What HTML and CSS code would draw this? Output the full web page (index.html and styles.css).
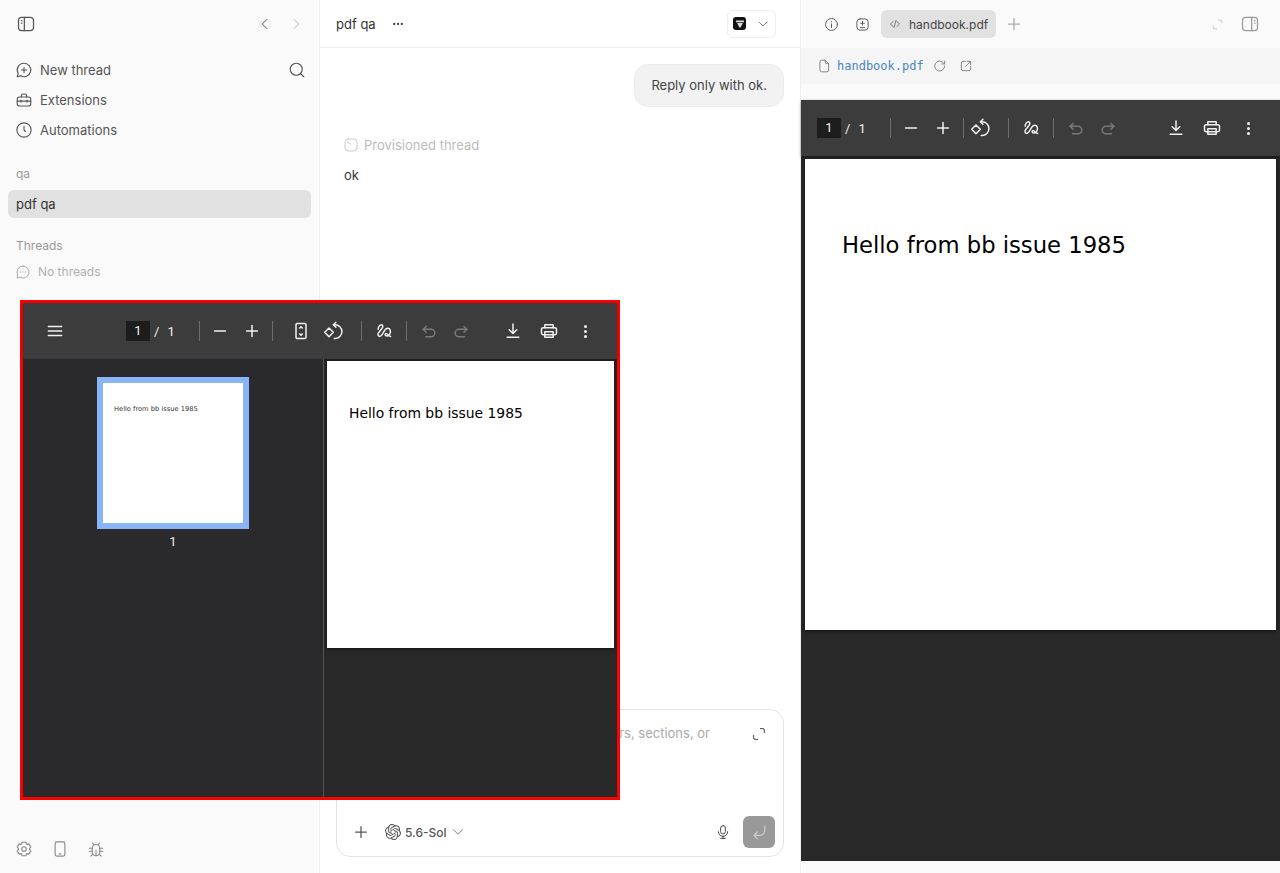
FILE: index.html
```html
<!DOCTYPE html>
<html lang="en">
<head>
  <meta charset="UTF-8">
  <title>pdf qa</title>
  <link rel="stylesheet" href="styles.css">
</head>
<body>
  <svg class="sprites" width="0" height="0">
    <defs>
      <g id="i-minus"><path d="M5.500 12h13"/></g>
      <g id="i-plus"><path d="M12 5.500v13M5.500 12h13"/></g>
      <g id="i-rotate"><path d="M2 13.600l5.200-5.200 5.200 5.200-5.200 5.200z"/><path d="M12.500 4.500h2a8.200 8.200 0 0 1 0 16.400h-1"/><path d="M15.500 1.500l-3 3 3 3"/></g>
      <g id="i-draw"><path d="M5 10C5 7 7 4.500 9 4.500s2 2.500.5 4.500L5.500 14C4 16 5 18.500 7 18.500S11 14 13 11s5.500-3 6.500 0-1 7-3.500 7-3.500-2-2-3 3 3.500 6 3.500"/></g>
      <g id="i-undo"><path d="M8.500 6.500L5 10l3.500 3.500"/><path d="M5 10h9.500a4.500 4.500 0 0 1 0 9H8"/></g>
      <g id="i-redo"><path d="M15.500 6.500L19 10l-3.500 3.500"/><path d="M19 10H9.500a4.500 4.500 0 0 0 0 9H16"/></g>
      <g id="i-download"><path d="M12 3.500v11.500M7.500 10.500L12 15l4.500-4.500M5 19.500h14"/></g>
      <g id="i-print"><path d="M7 8V4.500h10V8"/><rect x="3" y="8" width="18" height="8.500" rx="2"/><path d="M7 13h10v6.500H7z"/></g>
      <g id="i-chevron"><path d="M6 9l6 6 6-6"/></g>
    </defs>
  </svg>

  <div class="app">
    <aside class="sidebar">
      <div class="side-top">
        <svg class="icon icon-lg" viewBox="0 0 24 24"><rect x="3" y="4" width="18" height="16" rx="4"/><path d="M10 4v16M6.500 8h.5M6.500 11h.5"/></svg>
        <div class="side-nav">
          <svg class="icon" viewBox="0 0 24 24"><path d="M15 5l-7 7 7 7"/></svg>
          <svg class="icon faint" viewBox="0 0 24 24"><path d="M9 5l7 7-7 7"/></svg>
        </div>
      </div>

      <ul class="menu">
        <li class="menu-item">
          <svg class="icon" viewBox="0 0 24 24"><path d="M12 3a9 9 0 1 1-4.500 16.800L3 21l1.200-4.500A9 9 0 0 1 12 3z"/><path d="M12 8.500v7M8.500 12h7"/></svg>
          <span>New thread</span>
          <svg class="icon icon-search" viewBox="0 0 24 24"><circle cx="11" cy="11" r="8"/><path d="M17 17l4 4"/></svg>
        </li>
        <li class="menu-item">
          <svg class="icon" viewBox="0 0 24 24"><path d="M8.500 8V6a2 2 0 0 1 2-2h3a2 2 0 0 1 2 2v2"/><rect x="3" y="8" width="18" height="12" rx="3"/><path d="M3 13.500h18M8 12v3M16 12v3"/></svg>
          <span>Extensions</span>
        </li>
        <li class="menu-item">
          <svg class="icon" viewBox="0 0 24 24"><circle cx="12" cy="12" r="9.500"/><path d="M12 7v5l2 2"/></svg>
          <span>Automations</span>
        </li>
      </ul>

      <div class="side-label side-label-qa">qa</div>
      <div class="side-thread">pdf qa</div>
      <div class="side-label side-label-threads">Threads</div>
      <div class="no-threads">
        <svg class="icon icon-sm" viewBox="0 0 24 24"><path d="M12 3a9 9 0 1 1-4.500 16.800L3 21l1.200-4.500A9 9 0 0 1 12 3z"/><path d="M8 12h.5M11.800 12h.5M15.500 12h.5"/></svg>
        <span>No threads</span>
      </div>

      <div class="side-bottom">
        <svg class="icon" viewBox="0 0 24 24"><path d="M9.500 3h5l1 2.800 3-.6 2.500 4.300-2 2.500 2 2.500-2.500 4.300-3-.6-1 2.800h-5l-1-2.800-3 .6L3 14.500l2-2.500-2-2.500 2.500-4.300 3 .6z"/><circle cx="12" cy="12" r="3"/></svg>
        <svg class="icon" viewBox="0 0 24 24"><rect x="5.500" y="2.500" width="13" height="19" rx="2.500"/><path d="M11 18.500h2"/></svg>
        <svg class="icon" viewBox="0 0 24 24"><path d="M7 11a5 5 0 0 1 10 0v5a5 5 0 0 1-10 0z"/><path d="M9 6.500L7.500 4M15 6.500L16.500 4M7 11H3M17 11h4M7 15H3M17 15h4M8 19l-3 2.500M16 19l3 2.500M12 14v7"/></svg>
      </div>
    </aside>

    <main class="chat">
      <header class="chat-head">
        <span class="chat-title">pdf qa</span>
        <span class="chat-more">
          <svg class="icon" viewBox="0 0 24 24"><circle cx="5.500" cy="12" r="2"/><circle cx="12" cy="12" r="2"/><circle cx="18.500" cy="12" r="2"/></svg>
        </span>
        <div class="app-picker">
          <span class="app-logo"><svg viewBox="0 0 14 14" width="10" height="10"><path d="M1.500 2h11v2.500h-11zM3 5.500h8L7.800 12H6.200z"/></svg></span>
          <svg class="icon icon-chev" viewBox="0 0 24 24"><use href="#i-chevron"/></svg>
        </div>
      </header>

      <div class="messages">
        <div class="bubble">Reply only with ok.</div>
        <div class="status">
          <svg class="icon icon-sm" viewBox="0 0 24 24"><rect x="3" y="3" width="18" height="18" rx="5"/><path d="M7 8l4 2.500M7 8v.5"/></svg>
          <span>Provisioned thread</span>
        </div>
        <p class="reply">ok</p>
      </div>

      <div class="composer">
        <div class="composer-text">
          <span class="placeholder">rs, sections, or</span>
          <svg class="icon icon-expand" viewBox="0 0 24 24"><path d="M14 4h4a2 2 0 0 1 2 2v4M10 20H6a2 2 0 0 1-2-2v-4"/></svg>
        </div>
        <div class="composer-bar">
          <svg class="icon icon-add" viewBox="0 0 24 24"><use href="#i-plus"/></svg>
          <svg class="icon icon-model" viewBox="0 0 24 24"><path d="M22.2819 9.8211a5.9847 5.9847 0 0 0-.5157-4.9108 6.0462 6.0462 0 0 0-6.5098-2.9A6.0651 6.0651 0 0 0 4.9807 4.1818a5.9847 5.9847 0 0 0-3.9977 2.9 6.0462 6.0462 0 0 0 .7427 7.0966 5.98 5.98 0 0 0 .511 4.9107 6.051 6.051 0 0 0 6.5146 2.9001A5.9847 5.9847 0 0 0 13.2599 24a6.0557 6.0557 0 0 0 5.7718-4.2058 5.9894 5.9894 0 0 0 3.9977-2.9001 6.0557 6.0557 0 0 0-.7475-7.0729zm-9.022 12.6081a4.4755 4.4755 0 0 1-2.8764-1.0408l.1419-.0804 4.7783-2.7582a.7948.7948 0 0 0 .3927-.6813v-6.7369l2.02 1.1686a.071.071 0 0 1 .038.052v5.5826a4.504 4.504 0 0 1-4.4945 4.4944zm-9.6607-4.1254a4.4708 4.4708 0 0 1-.5346-3.0137l.142.0852 4.783 2.7582a.7712.7712 0 0 0 .7806 0l5.8428-3.3685v2.3324a.0804.0804 0 0 1-.0332.0615L9.74 19.9502a4.4992 4.4992 0 0 1-6.1408-1.6464zM2.3408 7.8956a4.485 4.485 0 0 1 2.3655-1.9728V11.6a.7664.7664 0 0 0 .3879.6765l5.8144 3.3543-2.0201 1.1685a.0757.0757 0 0 1-.071 0l-4.8303-2.7865A4.504 4.504 0 0 1 2.3408 7.872zm16.5963 3.8558L13.1038 8.364 15.1192 7.2a.0757.0757 0 0 1 .071 0l4.8303 2.7913a4.4944 4.4944 0 0 1-.6765 8.1042v-5.6772a.79.79 0 0 0-.407-.667zm2.0107-3.0231l-.142-.0852-4.7735-2.7818a.7759.7759 0 0 0-.7854 0L9.409 9.2297V6.8974a.0662.0662 0 0 1 .0284-.0615l4.8303-2.7866a4.4992 4.4992 0 0 1 6.6802 4.66zM8.3065 12.863l-2.02-1.1638a.0804.0804 0 0 1-.038-.0567V6.0742a4.4992 4.4992 0 0 1 7.3757-3.4537l-.142.0805L8.704 5.459a.7948.7948 0 0 0-.3927.6813zm1.0976-2.3654l2.602-1.4998 2.6069 1.4998v2.9994l-2.5974 1.4997-2.6067-1.4997Z"/></svg>
          <span class="model-name">5.6-Sol</span>
          <svg class="icon icon-chev icon-chev-model" viewBox="0 0 24 24"><use href="#i-chevron"/></svg>
          <svg class="icon icon-mic" viewBox="0 0 24 24"><rect x="8.500" y="2.500" width="7" height="12.500" rx="3.500"/><path d="M5 11.500a7 7 0 0 0 14 0M12 18.500v3M8.500 21.500h7"/></svg>
          <button class="send">
            <svg class="icon" viewBox="0 0 24 24"><path d="M19 5v5a6 6 0 0 1-6 6H6M10 12l-4 4 4 4"/></svg>
          </button>
        </div>
      </div>
    </main>

    <section class="preview">
      <div class="tabs">
        <svg class="icon" viewBox="0 0 24 24"><circle cx="12" cy="12" r="9.500"/><path d="M12 11v6M12 7.200v.6"/></svg>
        <svg class="icon tab-diff" viewBox="0 0 24 24"><rect x="3" y="3" width="18" height="18" rx="5"/><path d="M12 7v6M9 10h6M8.500 17h7"/></svg>
        <div class="tab">
          <svg class="icon" viewBox="0 0 24 24"><path d="M8 7l-5 5 5 5M16 7l5 5-5 5M14 5l-4 14"/></svg>
          <span>handbook.pdf</span>
        </div>
        <svg class="icon icon-tab-add" viewBox="0 0 24 24"><use href="#i-plus"/></svg>
        <svg class="icon icon-shrink" viewBox="0 0 24 24"><path d="M14 4h4a2 2 0 0 1 2 2v3M10 20H6a2 2 0 0 1-2-2v-3"/></svg>
        <svg class="icon icon-panel" viewBox="0 0 24 24"><rect x="3" y="4" width="18" height="16" rx="4"/><path d="M14 4v16M17.500 8h.5M17.500 11h.5"/></svg>
      </div>

      <div class="file-bar">
        <svg class="icon" viewBox="0 0 24 24"><path d="M5 5a3 3 0 0 1 3-3h6l6 6v11a3 3 0 0 1-3 3H8a3 3 0 0 1-3-3z"/><path d="M14 2v3a3 3 0 0 0 3 3h3"/></svg>
        <span class="file-name">handbook.pdf</span>
        <svg class="icon icon-reload" viewBox="0 0 24 24"><path d="M20 12a8.500 8.500 0 1 1-2.500-6L20 8.500M20 3.500v5h-5"/></svg>
        <svg class="icon icon-open" viewBox="0 0 24 24"><path d="M11 4H7a3 3 0 0 0-3 3v10a3 3 0 0 0 3 3h10a3 3 0 0 0 3-3v-4"/><path d="M14 4h6v6M20 4l-9 9"/></svg>
      </div>

      <div class="viewer">
        <div class="pdf-bar">
          <div class="pager">
            <span class="page-box">1</span>
            <span class="page-sep">/</span>
            <span class="page-total">1</span>
          </div>
          <span class="pdf-div"></span>
          <div class="pdf-group pdf-zoom">
            <svg class="pdf-icon" viewBox="0 0 24 24"><use href="#i-minus"/></svg>
            <svg class="pdf-icon" viewBox="0 0 24 24"><use href="#i-plus"/></svg>
          </div>
          <span class="pdf-div"></span>
          <div class="pdf-group pdf-page-tools pdf-rotate-only">
            <svg class="pdf-icon" viewBox="0 0 24 24"><use href="#i-rotate"/></svg>
          </div>
          <span class="pdf-div"></span>
          <div class="pdf-group pdf-draw">
            <svg class="pdf-icon" viewBox="0 0 24 24"><use href="#i-draw"/></svg>
          </div>
          <span class="pdf-div"></span>
          <div class="pdf-group pdf-history">
            <svg class="pdf-icon dim" viewBox="0 0 24 24"><use href="#i-undo"/></svg>
            <svg class="pdf-icon dim" viewBox="0 0 24 24"><use href="#i-redo"/></svg>
          </div>
          <div class="pdf-group pdf-end">
            <svg class="pdf-icon" viewBox="0 0 24 24"><use href="#i-download"/></svg>
            <svg class="pdf-icon" viewBox="0 0 24 24"><use href="#i-print"/></svg>
            <span class="pdf-dots"><i></i><i></i><i></i></span>
          </div>
        </div>
        <div class="viewer-body">
          <div class="pdf-page">Hello from bb issue 1985</div>
        </div>
      </div>
    </section>
  </div>

  <!-- popped out viewer with the page sidebar open -->
  <div class="popout">
    <div class="pdf-bar pop-bar">
      <svg class="pdf-icon pop-menu" viewBox="0 0 24 24"><path d="M4 6.500h16M4 12h16M4 17.500h16"/></svg>
      <div class="pager">
        <span class="page-box">1</span>
        <span class="page-sep">/</span>
        <span class="page-total">1</span>
      </div>
      <span class="pdf-div"></span>
      <div class="pdf-group pdf-zoom">
        <svg class="pdf-icon" viewBox="0 0 24 24"><use href="#i-minus"/></svg>
        <svg class="pdf-icon" viewBox="0 0 24 24"><use href="#i-plus"/></svg>
      </div>
      <span class="pdf-div"></span>
      <div class="pdf-group pdf-page-tools">
        <svg class="pdf-icon" viewBox="0 0 24 24"><rect x="6" y="3" width="12" height="18" rx="1.500"/><path d="M10.500 8.500L12 7l1.500 1.500M10.500 15.500L12 17l1.500-1.500"/></svg>
        <svg class="pdf-icon" viewBox="0 0 24 24"><use href="#i-rotate"/></svg>
      </div>
      <span class="pdf-div"></span>
      <div class="pdf-group pdf-draw">
        <svg class="pdf-icon" viewBox="0 0 24 24"><use href="#i-draw"/></svg>
      </div>
      <span class="pdf-div"></span>
      <div class="pdf-group pdf-history">
        <svg class="pdf-icon dim" viewBox="0 0 24 24"><use href="#i-undo"/></svg>
        <svg class="pdf-icon dim" viewBox="0 0 24 24"><use href="#i-redo"/></svg>
      </div>
      <div class="pdf-group pdf-end">
        <svg class="pdf-icon" viewBox="0 0 24 24"><use href="#i-download"/></svg>
        <svg class="pdf-icon" viewBox="0 0 24 24"><use href="#i-print"/></svg>
        <span class="pdf-dots"><i></i><i></i><i></i></span>
      </div>
    </div>
    <div class="pop-body">
      <div class="thumbs">
        <div class="thumb"><div class="thumb-page">Hello from bb issue 1985</div></div>
        <div class="thumb-num">1</div>
      </div>
      <div class="pop-main">
        <div class="pop-page">Hello from bb issue 1985</div>
      </div>
    </div>
  </div>
</body>
</html>
```

FILE: styles.css
```css
* {
  margin: 0;
  padding: 0;
  box-sizing: border-box;
}

html, body {
  height: 100%;
  overflow: hidden;
}

body {
  position: relative;
  background-color: #fff;
  color: #333;
  font-family: Inter, 'Noto Sans', sans-serif;
  font-size: 13px;
}

.sprites {
  position: absolute;
}

.app {
  display: grid;
  grid-template-columns: 320px 481px 479px;
  height: 873px;
}

/* Shared icon look */
.icon {
  width: 16px;
  height: 16px;
  flex: none;
  fill: none;
  stroke: #555;
  stroke-width: 1.5;
  stroke-linecap: round;
  stroke-linejoin: round;
}

.icon-lg {
  width: 20px;
  height: 20px;
}

.icon-sm {
  width: 16px;
  height: 16px;
  stroke: #aaa;
}

.faint {
  stroke: #bbb;
}

/* Left sidebar */
.sidebar {
  display: flex;
  flex-direction: column;
  background-color: #fafafa;
  border-right: 1px solid #eee;
  padding: 0 8px;
}

.side-top {
  display: flex;
  align-items: center;
  justify-content: space-between;
  height: 48px;
  padding: 0 7px 0 8px;
}

.side-nav {
  display: flex;
  gap: 15px;
}

.menu {
  list-style: none;
  margin-top: 7px;
}

.menu-item {
  display: flex;
  align-items: center;
  gap: 7px;
  height: 30px;
  padding: 0 5px 0 7px;
  color: #555;
  font-size: 13px;
}

.menu-item .icon {
  width: 18px;
  height: 18px;
}

.menu-item .icon-search {
  margin-left: auto;
  stroke: #555;
}

.side-label {
  padding-left: 8px;
  color: #999;
  font-size: 12px;
  line-height: 16px;
}

.side-label-qa {
  margin-top: 21px;
}

.side-thread {
  height: 28px;
  margin-top: 8px;
  padding: 0 8px;
  border-radius: 6px;
  background-color: #e1e1e1;
  color: #333;
  font-size: 13px;
  line-height: 28px;
}

.side-label-threads {
  margin-top: 20px;
}

.no-threads {
  display: flex;
  align-items: center;
  gap: 7px;
  margin-top: 10px;
  padding-left: 7px;
  color: #b0b0b0;
  font-size: 12px;
  line-height: 16px;
}

.side-bottom {
  display: flex;
  gap: 18px;
  margin-top: auto;
  padding: 0 0 15px 7px;
}

.side-bottom .icon {
  width: 18px;
  height: 18px;
  stroke: #8a8a8a;
}

/* Chat column */
.chat {
  display: flex;
  flex-direction: column;
  background-color: #fff;
  border-right: 1px solid #eee;
  padding-bottom: 16px;
}

.chat-head {
  display: flex;
  align-items: center;
  height: 48px;
  padding: 0 24px 0 16px;
  border-bottom: 1px solid #eee;
}

.chat-title {
  color: #333;
  font-size: 13px;
}

.chat-more {
  display: flex;
  margin-left: 15px;
}

.chat-more .icon {
  width: 14px;
  height: 14px;
  fill: #444;
  stroke: none;
}

.app-picker {
  display: flex;
  align-items: center;
  gap: 9px;
  height: 28px;
  margin-left: auto;
  padding: 0 4px 0 5px;
  border: 1px solid #eee;
  border-radius: 6px;
}

.app-logo {
  display: flex;
  align-items: center;
  justify-content: center;
  width: 13px;
  height: 13px;
  border-radius: 3px;
  background-color: #111;
}

.app-logo svg {
  fill: #ddd;
}

.icon-chev {
  width: 16px;
  height: 16px;
  stroke: #888;
}

.icon-chev-model {
  width: 18px;
  height: 18px;
  margin-left: -4px;
  stroke: #777;
  stroke-width: 1.25;
}

.messages {
  display: flex;
  flex-direction: column;
  flex: 1;
  padding: 16px 16px 0 24px;
}

.bubble {
  align-self: flex-end;
  height: 43px;
  padding: 0 16px;
  border: 1px solid #ececec;
  border-radius: 14px;
  background-color: #f2f2f2;
  color: #444;
  font-size: 13px;
  line-height: 41px;
}

.status {
  display: flex;
  align-items: center;
  gap: 5px;
  margin: 30px 0 0 -1px;
  color: #bbb;
  font-size: 13px;
  line-height: 16px;
}

.status .icon-sm {
  stroke: #c8c8c8;
}

.reply {
  margin-top: 14px;
  color: #333;
  font-size: 13px;
  line-height: 16px;
}

.composer {
  display: flex;
  flex-direction: column;
  justify-content: space-between;
  height: 148px;
  margin: 0 16px;
  padding: 15px 8px 8px 16px;
  border: 1px solid #e4e4e4;
  border-radius: 14px;
  background-color: #fff;
}

.composer-text {
  display: flex;
  align-items: center;
  justify-content: flex-end;
  padding-right: 8px;
}

.placeholder {
  margin: 0 41px 2px 0;
  color: #aaa;
  font-size: 13px;
}

.icon-expand {
  stroke: #444;
}

.composer-bar {
  display: flex;
  align-items: center;
  height: 32px;
}

.icon-add {
  width: 20px;
  height: 20px;
  margin-left: -2px;
  stroke: #555;
}

.icon-model {
  margin-left: 14px;
  fill: #555;
  stroke: none;
}

.model-name {
  margin: 0 6px 0 4px;
  color: #555;
  font-size: 12px;
  font-weight: 500;
}

.icon-mic {
  margin-left: auto;
  margin-right: 12px;
  stroke: #444;
}

.send {
  display: flex;
  align-items: center;
  justify-content: center;
  width: 32px;
  height: 32px;
  border: 0;
  border-radius: 6px;
  background-color: #999;
}

.send .icon {
  width: 20px;
  height: 20px;
  stroke: #ccc;
}

/* Right preview column */
.preview {
  display: flex;
  flex-direction: column;
  height: 873px;
  background-color: #fafafa;
}

.tabs {
  display: flex;
  align-items: center;
  gap: 16px;
  height: 48px;
  padding: 0 20px 0 23px;
}

.tabs > .icon {
  width: 15px;
  height: 15px;
}

.tab {
  display: flex;
  align-items: center;
  gap: 8px;
  height: 28px;
  margin-left: -5px;
  padding: 0 8px;
  border-radius: 6px;
  background-color: #e1e1e1;
  color: #444;
  font-size: 12px;
}

.tab .icon {
  width: 12px;
  height: 12px;
}

.tabs > .icon-tab-add {
  width: 20px;
  height: 20px;
  margin-left: -8px;
  stroke: #aaa;
}

.tabs > .icon-shrink {
  width: 13px;
  height: 13px;
  margin-left: auto;
  stroke: #bbb;
}

.tabs > .icon-panel {
  width: 20px;
  height: 20px;
  stroke: #999;
}

.file-bar {
  display: flex;
  align-items: center;
  height: 36px;
  padding: 0 0 0 16px;
  background-color: #f5f5f5;
}

.file-bar .icon {
  width: 14px;
  height: 14px;
  stroke: #777;
}

.file-name {
  margin-left: 6px;
  color: #4a86c0;
  font-family: 'DejaVu Sans Mono', monospace;
  font-size: 12px;
}

.file-bar .icon-reload {
  margin-left: 9px;
}

.file-bar .icon-open {
  margin-left: 12px;
}

.viewer {
  display: flex;
  flex-direction: column;
  height: 761px;
  margin-top: 16px;
  background-color: #282828;
}

/* PDF toolbar, used twice */
.pdf-bar {
  display: flex;
  align-items: center;
  height: 56px;
  flex: none;
  padding: 0 22px 0 16px;
  background-color: #3c3c3c;
  box-shadow: 0 1px 3px rgba(0, 0, 0, 0.4);
  color: #f1f1f1;
  font-family: Roboto, sans-serif;
  font-size: 13px;
}

.pager {
  display: flex;
  align-items: center;
  width: 73px;
  flex: none;
}

.page-box {
  width: 24px;
  height: 20px;
  background-color: #1d1d1d;
  text-align: center;
  line-height: 20px;
}

.page-sep {
  margin-left: 4px;
}

.page-total {
  margin-left: 8px;
}

.pdf-div {
  width: 1px;
  height: 20px;
  flex: none;
  background-color: #6e6e6e;
}

.pdf-group {
  display: flex;
  align-items: center;
  gap: 12px;
}

.pdf-zoom {
  margin: 0 10px;
}

.pdf-page-tools {
  margin: 0 18px;
}

.pdf-page-tools.pdf-rotate-only {
  margin-left: 6px;
}

.pdf-draw {
  margin: 0 12px;
}

.pdf-history {
  margin-left: 12px;
}

.pdf-end {
  gap: 16px;
  margin-left: auto;
}

.pdf-icon {
  width: 20px;
  height: 20px;
  flex: none;
  fill: none;
  stroke: #f1f1f1;
  stroke-width: 1.8;
  stroke-linecap: round;
  stroke-linejoin: round;
}

.pdf-icon.dim {
  stroke: #7a7a7a;
}

.pdf-dots {
  display: flex;
  flex-direction: column;
  align-items: center;
  gap: 2px;
  width: 20px;
}

.pdf-dots i {
  width: 3px;
  height: 3px;
  border-radius: 50%;
  background-color: #f1f1f1;
}

.viewer-body {
  flex: 1;
  padding: 3px 4px;
}

.pdf-page {
  height: 471px;
  padding: 71px 0 0 37px;
  background-color: #fff;
  box-shadow: 0 1px 4px rgba(0, 0, 0, 0.6);
  color: #000;
  font-family: 'DejaVu Sans', sans-serif;
  font-size: 22.7px;
  line-height: 30px;
}

/* Floating viewer over the page */
.popout {
  position: absolute;
  top: 300px;
  left: 20px;
  display: flex;
  flex-direction: column;
  width: 600px;
  height: 500px;
  border: 3px solid #f00;
  background-color: #282828;
}

.pop-bar {
  padding-left: 22px;
}

.pop-menu {
  margin-right: 61px;
}

.pop-body {
  display: flex;
  flex: 1;
  min-height: 0;
}

.thumbs {
  display: flex;
  flex-direction: column;
  align-items: center;
  width: 301px;
  padding-top: 18px;
  border-right: 1px solid #555;
  background-color: #2a2a2c;
}

.thumb {
  width: 152px;
  height: 152px;
  border: 6px solid #8ab4f8;
  background-color: #fff;
}

.thumb-page {
  padding: 22px 0 0 11px;
  color: #333;
  font-family: 'DejaVu Sans', sans-serif;
  font-size: 6.7px;
  line-height: 9px;
}

.thumb-num {
  margin-top: 5px;
  color: #e8eaed;
  font-family: Roboto, sans-serif;
  font-size: 13px;
  line-height: 16px;
}

.pop-main {
  flex: 1;
  padding: 2px 3px 0 3px;
}

.pop-page {
  height: 287px;
  padding: 43px 0 0 22px;
  background-color: #fff;
  box-shadow: 0 1px 3px rgba(0, 0, 0, 0.6);
  color: #000;
  font-family: 'DejaVu Sans', sans-serif;
  font-size: 13.9px;
  line-height: 18px;
}
```
